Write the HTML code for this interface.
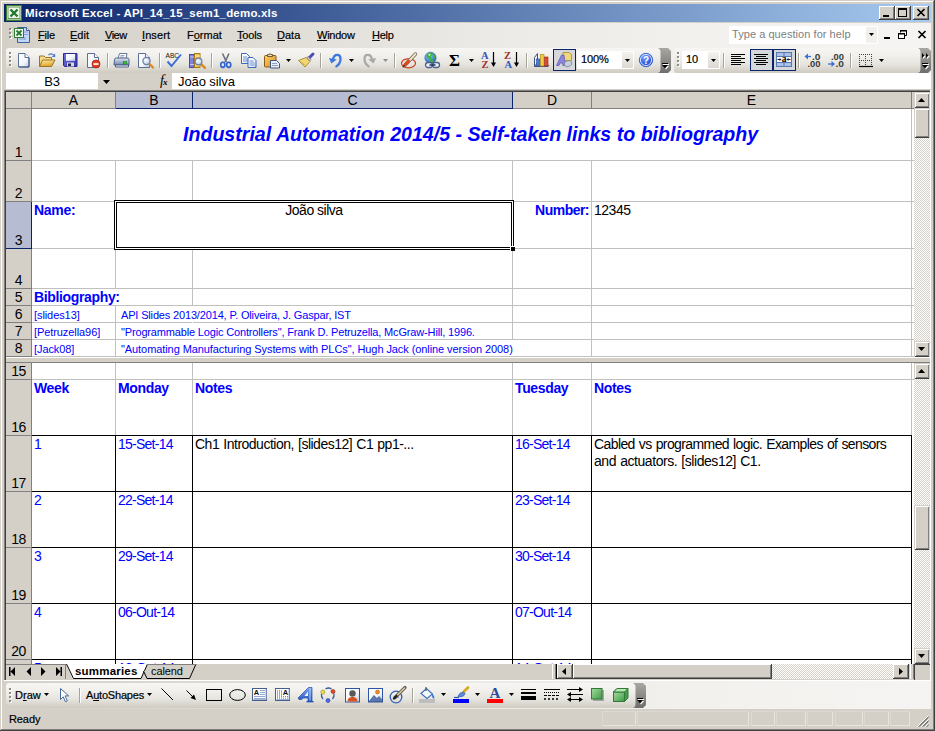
<!DOCTYPE html>
<html lang="en"><head><meta charset="utf-8"><title>Microsoft Excel - API_14_15_sem1_demo.xls</title>
<style>
*{box-sizing:border-box;margin:0;padding:0}
html,body{width:935px;height:731px;overflow:hidden;background:#d4d0c8}
body{position:relative;font-family:"Liberation Sans",sans-serif;font-size:11px;color:#000}
.a{position:absolute}
.t{position:absolute;white-space:nowrap;line-height:1}
.ui{font-size:11px;letter-spacing:0;-webkit-text-stroke:0.2px #000}
u{text-decoration:underline;text-underline-offset:1px}
.cell{position:absolute;white-space:nowrap;line-height:16px;font-size:14px;letter-spacing:-0.49px}
.b{color:#0000ff}
.bold{font-weight:bold;letter-spacing:-0.35px}
.gl{position:absolute;background:#c0c0c0}
.bl{position:absolute;background:#000}
.rh{position:absolute;left:6px;width:26px;background:#d4d0c8;border-right:1px solid #808080;border-bottom:1px solid #808080;text-align:center}
.rh span{position:absolute;left:0;right:0;bottom:0;line-height:16px;font-size:14px;letter-spacing:-0.5px}
.ch{position:absolute;top:92px;height:17px;background:#d4d0c8;border-right:1px solid #808080;border-bottom:1px solid #808080;font-size:14px;text-align:center;line-height:16px}
.sel{background:#b6bdd2;border-color:#0a246a}
.btn{position:absolute;background:#d4d0c8;box-shadow:inset -1px -1px 0 #404040,inset 1px 1px 0 #fff,inset -2px -2px 0 #808080}
.sb{position:absolute;background:#d4d0c8;box-shadow:inset 1px 1px 0 #d4d0c8,inset -1px 0 0 #d4d0c8,inset 0 -1px 0 #404040,inset 2px 2px 0 #fff,inset -2px -2px 0 #808080}
.track{position:absolute;background-color:#e9e7e3;background-image:conic-gradient(#fff 25%,#d4d0c8 0 50%,#fff 0 75%,#d4d0c8 0);background-size:2px 2px}
.sep{position:absolute;width:1px;background:#a6a398;box-shadow:1px 0 0 #fff}
.dot{position:absolute;width:2px;height:2px;background:#8d8a82;box-shadow:1px 1px 0 #fff}
svg{position:absolute;overflow:visible}
</style></head>
<body>
<div class="a" style="left:0;top:0;width:935px;height:731px;box-shadow:inset -1px -1px 0 #404040,inset 1px 1px 0 #d4d0c8,inset -2px -2px 0 #808080,inset 2px 2px 0 #fff"></div>
<div class="a" style="left:4px;top:4px;width:927px;height:18px;background:linear-gradient(90deg,#0a246a,#a6caf0)"></div>
<svg style="left:6px;top:5px" width="16" height="16" viewBox="0 0 16 16"><rect x="0.5" y="0.5" width="15" height="15" fill="#5e9552" stroke="#3d7a36"/><rect x="1.5" y="1.5" width="13" height="13" fill="none" stroke="#a9c9a0"/><rect x="2.500" y="2.500" width="11" height="10.500" fill="#f1f6ee"/><path d="M4.500 4.500l7 7M11.500 4.500l-7 7" stroke="#1f7a2c" stroke-width="2.400"/></svg>
<div class="t" style="left:25px;top:8px;color:#fff;font-size:11.5px;font-weight:bold;letter-spacing:0.2px">Microsoft Excel - API_14_15_sem1_demo.xls</div>
<div class="btn" style="left:879px;top:6px;width:16px;height:14px"></div><div class="a" style="left:883px;top:15px;width:6px;height:2px;background:#000"></div>
<div class="btn" style="left:895px;top:6px;width:16px;height:14px"></div><div class="a" style="left:898px;top:8px;width:9px;height:9px;border:1px solid #000;border-top-width:2px"></div>
<div class="btn" style="left:913px;top:6px;width:16px;height:14px"></div><svg style="left:917px;top:9px" width="8" height="7" viewBox="0 0 8 7"><path d="M0.500 0l7 7M7.500 0l-7 7" stroke="#000" stroke-width="1.700"/></svg>
<div class="a" style="left:4px;top:23px;width:927px;height:25px;background:linear-gradient(90deg,#d4d0c8 0%,#dedbd4 25%,#ebe9e5 50%,#f2f1ee 75%,#f5f4f2 100%)"></div>
<div class="dot" style="left:9px;top:28px"></div><div class="dot" style="left:9px;top:32px"></div><div class="dot" style="left:9px;top:36px"></div>
<svg style="left:14px;top:27px" width="17" height="17" viewBox="0 0 17 17"><path d="M3.500 0.500h9l3 3v12h-12z" fill="#c3d7f7" stroke="#3f5f9a"/><path d="M12.500 0.500v3h3" fill="#eef4ff" stroke="#3f5f9a"/><path d="M10 5h4M10 7.500h4M5 12h6M11 10v3" stroke="#7f9fd8"/><rect x="0.500" y="1.500" width="9" height="9" fill="#f1f6ee" stroke="#2f7d32"/><path d="M2.500 3.500l5 5M7.500 3.500l-5 5" stroke="#1e7a2a" stroke-width="1.800"/></svg>
<div class="t ui" style="left:38px;top:30px;letter-spacing:-0.2px"><u>F</u>ile</div><div class="t ui" style="left:70px;top:30px;letter-spacing:0px"><u>E</u>dit</div><div class="t ui" style="left:105px;top:30px;letter-spacing:-0.5px"><u>V</u>iew</div><div class="t ui" style="left:142px;top:30px;letter-spacing:0.1px"><u>I</u>nsert</div><div class="t ui" style="left:187px;top:30px;letter-spacing:0px">F<u>o</u>rmat</div><div class="t ui" style="left:237px;top:30px;letter-spacing:-0.2px"><u>T</u>ools</div><div class="t ui" style="left:277px;top:30px;letter-spacing:0px"><u>D</u>ata</div><div class="t ui" style="left:317px;top:30px;letter-spacing:-0.25px"><u>W</u>indow</div><div class="t ui" style="left:372px;top:30px;letter-spacing:-0.25px"><u>H</u>elp</div>
<div class="a" style="left:729px;top:26px;width:149px;height:18px;background:#fff"></div><div class="t ui" style="left:732px;top:29px;color:#808080;letter-spacing:0.05px;-webkit-text-stroke:0">Type a question for help</div><div class="a" style="left:866px;top:27px;width:11px;height:16px;background:#f1f0ed"></div><svg style="left:869px;top:33px" width="5" height="3" viewBox="0 0 7 4"><path d="M0 0h7l-3.500 4z" fill="#000"/></svg>
<div class="a" style="left:884px;top:37px;width:6px;height:2px;background:#000"></div><svg style="left:898px;top:30px" width="9" height="9" viewBox="0 0 9 9"><path d="M2.500 2.500v-2h6v5h-2" fill="none" stroke="#000"/><path d="M2 1h7" stroke="#000"/><rect x="0.500" y="3.500" width="6" height="5" fill="#fff" stroke="#000"/><path d="M0 4h7" stroke="#000"/></svg><svg style="left:918px;top:31px" width="8" height="7" viewBox="0 0 8 7"><path d="M0.500 0l7 7M7.500 0l-7 7" stroke="#000" stroke-width="1.700"/></svg>
<div class="a" style="left:4px;top:48px;width:927px;height:25px;background:linear-gradient(90deg,#d4d0c8 0%,#dedbd4 25%,#ebe9e5 50%,#f2f1ee 75%,#f5f4f2 100%)"></div>
<div class="a" style="left:6px;top:48px;width:665px;height:25px;border-radius:3px 6px 6px 3px;background:linear-gradient(180deg,#f7f6f4 0%,#f1f0ec 30%,#e6e4de 65%,#cfcbc2 100%)"></div>
<div class="a" style="left:674px;top:48px;width:257px;height:25px;border-radius:3px 6px 6px 3px;background:linear-gradient(180deg,#f7f6f4 0%,#f1f0ec 30%,#e6e4de 65%,#cfcbc2 100%)"></div>
<div class="dot" style="left:9px;top:52px"></div><div class="dot" style="left:9px;top:56px"></div><div class="dot" style="left:9px;top:60px"></div><div class="dot" style="left:9px;top:64px"></div>
<div class="dot" style="left:677px;top:52px"></div><div class="dot" style="left:677px;top:56px"></div><div class="dot" style="left:677px;top:60px"></div><div class="dot" style="left:677px;top:64px"></div>
<svg width="0" height="0" style="left:0;top:0"><defs>
<linearGradient id="gpage" x1="0" y1="0" x2="1" y2="1"><stop offset="0" stop-color="#ffffff"/><stop offset="0.6" stop-color="#f2f5fb"/><stop offset="1" stop-color="#b9c9e6"/></linearGradient>
<linearGradient id="gfold" x1="0" y1="0" x2="0.3" y2="1"><stop offset="0" stop-color="#fdf0b0"/><stop offset="1" stop-color="#e2a326"/></linearGradient>
<linearGradient id="gdisk" x1="0" y1="0" x2="1" y2="1"><stop offset="0" stop-color="#7373e0"/><stop offset="1" stop-color="#3636a8"/></linearGradient>
<linearGradient id="gblue" x1="0" y1="0" x2="0" y2="1"><stop offset="0" stop-color="#7aa6ee"/><stop offset="1" stop-color="#1f4fc0"/></linearGradient>
<linearGradient id="ggray" x1="0" y1="0" x2="0" y2="1"><stop offset="0" stop-color="#c8c8c8"/><stop offset="1" stop-color="#8e8e8e"/></linearGradient>
<radialGradient id="glens" cx="0.4" cy="0.4" r="0.7"><stop offset="0" stop-color="#ffffff"/><stop offset="1" stop-color="#a8c4e8"/></radialGradient>
<radialGradient id="ghelp" cx="0.4" cy="0.3" r="0.8"><stop offset="0" stop-color="#6ea0ff"/><stop offset="1" stop-color="#0b39c4"/></radialGradient>
<radialGradient id="gglobe" cx="0.35" cy="0.3" r="0.8"><stop offset="0" stop-color="#8fd0ff"/><stop offset="1" stop-color="#1c58b8"/></radialGradient>
<linearGradient id="ggreen" x1="0" y1="0" x2="1" y2="1"><stop offset="0" stop-color="#a6dba0"/><stop offset="1" stop-color="#3f9a45"/></linearGradient>
<linearGradient id="gclip" x1="0" y1="0" x2="1" y2="1"><stop offset="0" stop-color="#fbd46a"/><stop offset="1" stop-color="#d98a1c"/></linearGradient>
<linearGradient id="gprn" x1="0" y1="0" x2="0" y2="1"><stop offset="0" stop-color="#dfe6f2"/><stop offset="1" stop-color="#6f86ad"/></linearGradient>
<linearGradient id="gopt" x1="0" y1="0" x2="0" y2="1"><stop offset="0" stop-color="#a9a7a0"/><stop offset="1" stop-color="#6e6e6e"/></linearGradient>
</defs></svg>
<svg style="left:18px;top:53px" width="12" height="15" viewBox="0 0 12 15"><path d="M0.500 0.500h6.500l4 4v9.500h-10.500z" fill="url(#gpage)" stroke="#5d6f98"/><path d="M7 0.500v4h4" fill="#fff" stroke="#5d6f98"/><path d="M1 14h10M11 5v9" stroke="#3f5284" fill="none"/></svg>
<svg style="left:39px;top:52px" width="17" height="16" viewBox="0 0 17 16"><path d="M0.500 14.500v-10.500h4.500l1.500 1.500h6v2.500" fill="#f6dc8a" stroke="#9a7420"/><path d="M0.500 14.500l3-6.500h12.500l-3.500 6.500z" fill="url(#gfold)" stroke="#9a7420"/><path d="M9.500 3q3-2.500 5.500 0.500" fill="none" stroke="#4a78c8" stroke-width="1.100"/><path d="M16.200 1.500v3.500h-3.500z" fill="#4a78c8"/></svg>
<svg style="left:63px;top:53px" width="15" height="15" viewBox="0 0 15 15"><path d="M0.500 0.500h13.500v13h-12.500l-1-1z" fill="url(#gdisk)" stroke="#2b2b90"/><rect x="3" y="1" width="9" height="6.500" fill="#f4f6fb"/><rect x="3" y="1" width="9" height="6.500" fill="url(#gpage)"/><rect x="4" y="9.500" width="7" height="4" fill="#d8dae6"/><rect x="5" y="10.500" width="3" height="2.500" fill="#26264a"/></svg>
<svg style="left:87px;top:53px" width="16" height="16" viewBox="0 0 16 16"><path d="M0.500 0.500h7l4 4v10h-11z" fill="url(#gpage)" stroke="#5d6f98"/><path d="M7.500 0.500v4h4" fill="#fff" stroke="#5d6f98"/><circle cx="9" cy="11" r="4" fill="#e2401c" stroke="#a8200c" stroke-width="0.800"/><rect x="6.500" y="10.200" width="5" height="1.700" fill="#fff"/></svg>
<div class="sep" style="left:107px;top:53px;height:15px"></div>
<svg style="left:114px;top:53px" width="16" height="15" viewBox="0 0 16 15"><path d="M4 5.500l1.500-5h7.500l-1 5z" fill="#fff" stroke="#6a7a9a"/><path d="M6.500 2.500h4M6 4h4" stroke="#9aa8c4"/><path d="M0.500 6.500q0-1.500 2-1.500h10.500q2 0 2 1.500v5.500h-15z" fill="url(#gprn)" stroke="#4e6288"/><path d="M1.500 12h13v2h-13z" fill="#eef1f7" stroke="#4e6288"/><rect x="9.500" y="8.500" width="3" height="2.500" fill="#2fd22f" stroke="#1c7a1c" stroke-width="0.600"/></svg>
<svg style="left:138px;top:53px" width="17" height="16" viewBox="0 0 17 16"><path d="M0.500 0.500h7l4 4v10h-11z" fill="url(#gpage)" stroke="#5d6f98"/><path d="M7.500 0.500v4h4" fill="#fff" stroke="#5d6f98"/><path d="M11.02 10.52l4 4" stroke="#d9891e" stroke-width="2.400" stroke-linecap="round"/><circle cx="8.5" cy="8" r="3.6" fill="url(#glens)" stroke="#6f7f9f" stroke-width="1.200"/></svg>
<div class="sep" style="left:159px;top:53px;height:15px"></div>
<svg style="left:165px;top:51px" width="18" height="18" viewBox="0 0 18 18"><text x="0.500" y="6.500" font-family="Liberation Sans,sans-serif" font-size="7.500" fill="#111" textLength="13.500" lengthAdjust="spacingAndGlyphs">ABC</text><path d="M2.500 10.500l4 4.500 9.500-11.500" fill="none" stroke="#3b6fd8" stroke-width="1.900" stroke-linejoin="miter"/></svg>
<svg style="left:189px;top:53px" width="17" height="16" viewBox="0 0 17 16"><rect x="0.500" y="1.500" width="4.500" height="13" fill="#8080dc" stroke="#4a4aa8"/><path d="M1 4h4M1 11.500h4" stroke="#c8c8f4"/><rect x="5.500" y="0.500" width="5.500" height="14" fill="#f0c24a" stroke="#a87c18"/><path d="M6 3h5M6 12h5" stroke="#fff0b8"/><path d="M11.88 10.88l4 4" stroke="#d9891e" stroke-width="2.400" stroke-linecap="round"/><circle cx="9.5" cy="8.5" r="3.4" fill="url(#glens)" stroke="#6f7f9f" stroke-width="1.200"/></svg>
<div class="sep" style="left:211px;top:53px;height:15px"></div>
<svg style="left:220px;top:53px" width="12" height="15" viewBox="0 0 12 15"><path d="M2.500 0.500l4 8.500M9 0.500l-4 8.500" stroke="#6a6f80" stroke-width="1.600" fill="none"/><ellipse cx="2.800" cy="11.800" rx="2.100" ry="2.600" fill="none" stroke="#2f62d0" stroke-width="1.600"/><ellipse cx="8.700" cy="11.800" rx="2.100" ry="2.600" fill="none" stroke="#2f62d0" stroke-width="1.600"/></svg>
<svg style="left:241px;top:53px" width="16" height="15" viewBox="0 0 16 15"><path d="M0.500 0.500h5l3 3v7h-8z" fill="url(#gpage)" stroke="#3f66b8"/><path d="M2 4h4M2 6h5M2 8h5" stroke="#6a90d8"/><g transform="translate(6.500,4)"><path d="M0.500 0.500h5l3 3v7h-8z" fill="url(#gpage)" stroke="#3f66b8"/><path d="M2 4h4M2 6h5M2 8h5" stroke="#6a90d8"/></g></svg>
<svg style="left:264px;top:53px" width="17" height="16" viewBox="0 0 17 16"><rect x="0.500" y="2.500" width="11.500" height="11.500" rx="1" fill="url(#gclip)" stroke="#8a5a14"/><path d="M3.500 3.500v-2h1.500q1-1.800 2 0h1.500v2z" fill="#e9dcb0" stroke="#6a5a3a"/><path d="M6.500 7.500h6l3 3v4.500h-9z" fill="#e8eef8" stroke="#44557a"/><path d="M8 10.500h5M8 12.500h6" stroke="#8aa0c8"/></svg>
<svg style="left:286px;top:59px" width="5" height="3" viewBox="0 0 5 3"><path d="M0 0h5l-2.500 3z" fill="#000"/></svg>
<svg style="left:298px;top:52px" width="17" height="16" viewBox="0 0 17 16"><path d="M10.500 6.500l4.500-4.500" stroke="#4a4ab8" stroke-width="3" stroke-linecap="round"/><path d="M10 4.500l3 3-1.500 1.500-3-3z" fill="#c8c8d8" stroke="#70708a" stroke-width="0.700"/><path d="M8 5.500l4 4-5 5.500-6.500-6.500z" fill="#f0d878" stroke="#a88a28" stroke-width="0.900"/><path d="M3 9.500l4 4" stroke="#c8a838"/></svg>
<div class="sep" style="left:320px;top:53px;height:15px"></div>
<svg style="left:329px;top:52px" width="14" height="16" viewBox="0 0 14 16"><g transform="translate(0,1) scale(0.92)"><path d="M4.500 7q0.500-5 4.500-5 3.500 0 3.500 4.500 0 5-4.500 8" fill="none" stroke="#3b78e0" stroke-width="2.500" stroke-linecap="round"/><path d="M0 5.500l8.500 1.500-6 4.500z" fill="#3b78e0"/></g></svg>
<svg style="left:349px;top:59px" width="5" height="3" viewBox="0 0 5 3"><path d="M0 0h5l-2.500 3z" fill="#000"/></svg>
<svg style="left:362px;top:52px" width="14" height="16" viewBox="0 0 14 16"><g transform="translate(14,1) scale(-0.92,0.92)"><path d="M4.500 7q0.500-5 4.500-5 3.500 0 3.500 4.500 0 5-4.500 8" fill="none" stroke="#a9a9a9" stroke-width="2.500" stroke-linecap="round"/><path d="M0 5.500l8.500 1.500-6 4.500z" fill="#a9a9a9"/></g></svg>
<svg style="left:383px;top:59px" width="5" height="3" viewBox="0 0 5 3"><path d="M0 0h5l-2.500 3z" fill="#8e8e8e"/></svg>
<div class="sep" style="left:394px;top:53px;height:15px"></div>
<svg style="left:401px;top:52px" width="18" height="17" viewBox="0 0 18 17"><ellipse cx="7.500" cy="11.300" rx="7" ry="4.500" fill="none" stroke="#cc3a18" stroke-width="1.200"/><path d="M4.500 12.500l10-10.500" stroke="#6f6450" stroke-width="3.400" stroke-linecap="round"/><path d="M5.500 11.500l9-9.500" stroke="#efe6cc" stroke-width="1.900" stroke-linecap="round"/><path d="M3.500 13.500l4-4.300" stroke="#e04a20" stroke-width="3.200" stroke-linecap="round"/><path d="M2.200 14.800l1-1" stroke="#333" stroke-width="1.400" stroke-linecap="round"/></svg>
<svg style="left:424px;top:52px" width="17" height="17" viewBox="0 0 17 17"><circle cx="6.500" cy="5.800" r="5.600" fill="url(#gglobe)" stroke="#3a62a8" stroke-width="0.700"/><path d="M2.500 3q2.500-3 6.500-2l-0.500 2-2 1.500 1 2 2 2.500-1 2-2.500-1.500-1-3-2-0.500z" fill="#3fb33f"/><path d="M10 2.500l1.500 1.500-0.500 3-1.500-1.500z" fill="#3fb33f"/><circle cx="5.500" cy="2.800" r="1" fill="#d8f4d0"/><rect x="1.500" y="10.500" width="7" height="5" rx="2.500" fill="#eef2fa" stroke="#4a5f8c" stroke-width="1.300"/><rect x="8.500" y="10.500" width="7" height="5" rx="2.500" fill="#eef2fa" stroke="#4a5f8c" stroke-width="1.300"/><path d="M5.500 13h6" stroke="#1c2c58" stroke-width="1.500"/></svg>
<svg style="left:449px;top:52px" width="12" height="16" viewBox="0 0 12 16"><text x="0" y="13.500" font-family="Liberation Serif,serif" font-size="17" font-weight="bold" fill="#000" textLength="11" lengthAdjust="spacingAndGlyphs">Σ</text></svg>
<svg style="left:469px;top:59px" width="5" height="3" viewBox="0 0 5 3"><path d="M0 0h5l-2.500 3z" fill="#000"/></svg>
<svg style="left:481px;top:51px" width="17" height="18" viewBox="0 0 17 18"><text x="0" y="8" font-family="Liberation Serif,serif" font-size="10.500" font-weight="bold" fill="#3355b8">A</text><text x="0.500" y="16.500" font-family="Liberation Serif,serif" font-size="10.500" font-weight="bold" fill="#a03030">Z</text><path d="M12.500 1v13" stroke="#000" stroke-width="1.200"/><path d="M10 11.500h5l-2.500 4.500z" fill="#000"/></svg>
<svg style="left:504px;top:51px" width="17" height="18" viewBox="0 0 17 18"><text x="0" y="8" font-family="Liberation Serif,serif" font-size="10.500" font-weight="bold" fill="#a03030">Z</text><text x="0.500" y="16.500" font-family="Liberation Serif,serif" font-size="10.500" font-weight="bold" fill="#3355b8">A</text><path d="M12.500 1v13" stroke="#000" stroke-width="1.200"/><path d="M10 11.500h5l-2.500 4.500z" fill="#000"/></svg>
<div class="sep" style="left:526px;top:53px;height:15px"></div>
<svg style="left:533px;top:52px" width="17" height="16" viewBox="0 0 17 16"><path d="M1.500 14.500v-9l3-4v9z" fill="#eef2fa" stroke="#44557a"/><path d="M1.500 14.500h13.500l1-1.500" fill="none" stroke="#44557a"/><rect x="3.500" y="7" width="3.500" height="7" fill="#4a7ae0" stroke="#2a4a9a" stroke-width="0.600"/><rect x="7.500" y="2.500" width="3.500" height="11.500" fill="#f2cf3a" stroke="#a8861a" stroke-width="0.600"/><rect x="11.500" y="5" width="3.500" height="9" fill="#e0482a" stroke="#9a2a16" stroke-width="0.600"/></svg>
<div class="a" style="left:553px;top:49px;width:23px;height:22px;background:#d6d7da;border:1px solid #0a246a"></div>
<svg style="left:556px;top:52px" width="17" height="17" viewBox="0 0 17 17"><path d="M7 0.500h6l2.500 2v6h-6l-2.500-2z" fill="#f0d878" stroke="#a88a28" stroke-width="0.800"/><path d="M0.500 13.500l5-10.500h2.500l1.500 10.500h-2.600l-0.300-2.500h-2.600l-1 2.500z" fill="#8a86dc" stroke="#5a56b0" stroke-width="0.700"/><rect x="8.500" y="9" width="7.500" height="5.500" rx="2.700" transform="rotate(-25 12 12)" fill="#c8d0dc" stroke="#7a8498" stroke-width="0.800"/></svg>
<div class="a" style="left:577px;top:51px;width:57px;height:18px;background:#fff"></div><div class="a" style="left:622px;top:52px;width:11px;height:16px;background:linear-gradient(180deg,#f3f2ee,#dcd9d2)"></div><div class="t ui" style="left:581px;top:54px;font-size:11px;letter-spacing:-0.1px">100%</div><svg style="left:625px;top:59px" width="5" height="3" viewBox="0 0 5 3"><path d="M0 0h5l-2.500 3z" fill="#000"/></svg>
<svg style="left:638px;top:52px" width="16" height="16" viewBox="0 0 16 16"><circle cx="8" cy="8" r="6.700" fill="url(#ghelp)" stroke="#2a58c8" stroke-width="0.800"/><circle cx="8" cy="8" r="5.600" fill="none" stroke="#e8f0ff" stroke-width="0.900"/><text x="8" y="11.500" text-anchor="middle" font-family="Liberation Sans,sans-serif" font-size="10" font-weight="bold" fill="#fff">?</text></svg>
<div class="a" style="left:682px;top:51px;width:38px;height:18px;background:#fff"></div><div class="a" style="left:708px;top:52px;width:11px;height:16px;background:linear-gradient(180deg,#f3f2ee,#dcd9d2)"></div><div class="t ui" style="left:686px;top:54px;font-size:11px;letter-spacing:-0.1px">10</div><svg style="left:711px;top:59px" width="5" height="3" viewBox="0 0 5 3"><path d="M0 0h5l-2.500 3z" fill="#000"/></svg>
<div class="sep" style="left:723px;top:53px;height:15px"></div>
<svg style="left:731px;top:54px" width="14" height="11" viewBox="0 0 14 11"><rect x="0" y="0" width="14" height="1" fill="#000"/><rect x="0" y="2" width="10" height="1" fill="#000"/><rect x="0" y="4" width="14" height="1" fill="#000"/><rect x="0" y="6" width="10" height="1" fill="#000"/><rect x="0" y="8" width="14" height="1" fill="#000"/><rect x="0" y="10" width="10" height="1" fill="#000"/></svg>
<div class="a" style="left:750px;top:49px;width:23px;height:22px;background:#d6d7da;border:1px solid #0a246a"></div>
<svg style="left:754px;top:54px" width="14" height="11" viewBox="0 0 14 11"><rect x="0" y="0" width="14" height="1" fill="#000"/><rect x="2" y="2" width="10" height="1" fill="#000"/><rect x="0" y="4" width="14" height="1" fill="#000"/><rect x="2" y="6" width="10" height="1" fill="#000"/><rect x="0" y="8" width="14" height="1" fill="#000"/><rect x="2" y="10" width="10" height="1" fill="#000"/></svg>
<div class="a" style="left:773px;top:49px;width:23px;height:22px;background:#d6d7da;border:1px solid #0a246a"></div>
<svg style="left:776px;top:52px" width="16" height="15" viewBox="0 0 16 15"><rect x="0.500" y="0.500" width="15" height="14" fill="#fdfdff" stroke="#5a78b0"/><rect x="1" y="1" width="14" height="3" fill="#a9c0e8"/><rect x="1" y="11" width="14" height="3" fill="#a9c0e8"/><path d="M8 1v3M8 11v3" stroke="#5a78b0"/><path d="M1 4.500h14M1 10.500h14" stroke="#5a78b0"/><text x="8" y="10" text-anchor="middle" font-family="Liberation Serif,serif" font-size="9.500" font-weight="bold" fill="#000">a</text><path d="M1.500 7.500h3.500M11 7.500h3.500" stroke="#222" stroke-width="1"/><path d="M3.500 6l2 1.500-2 1.500zM12.500 6l-2 1.500 2 1.500z" fill="#222"/></svg>
<div class="sep" style="left:798px;top:53px;height:15px"></div>
<svg style="left:804px;top:51px" width="18" height="18" viewBox="0 0 18 18"><path d="M2 5.500h5" stroke="#3b6fd8" stroke-width="1.300"/><path d="M0.500 5.500l3.500-3v6z" fill="#3b6fd8"/><text x="8" y="8.500" font-family="Liberation Sans,sans-serif" font-size="8.500" font-weight="bold" fill="#3a3a3a" textLength="8.500" lengthAdjust="spacingAndGlyphs">.0</text><text x="3.500" y="16" font-family="Liberation Sans,sans-serif" font-size="8.500" font-weight="bold" fill="#3a3a3a" textLength="13" lengthAdjust="spacingAndGlyphs">.00</text></svg>
<svg style="left:828px;top:51px" width="18" height="18" viewBox="0 0 18 18"><text x="3" y="8.500" font-family="Liberation Sans,sans-serif" font-size="8.500" font-weight="bold" fill="#3a3a3a" textLength="13" lengthAdjust="spacingAndGlyphs">.00</text><path d="M0 13h5" stroke="#3b6fd8" stroke-width="1.300"/><path d="M7 13l-3.500-3v6z" fill="#3b6fd8"/><text x="7.500" y="16" font-family="Liberation Sans,sans-serif" font-size="8.500" font-weight="bold" fill="#3a3a3a" textLength="8.500" lengthAdjust="spacingAndGlyphs">.0</text></svg>
<div class="sep" style="left:850px;top:53px;height:15px"></div>
<svg style="left:859px;top:54px" width="14" height="14" viewBox="0 0 14 14"><path d="M0 0.500h14M0 6.500h14M0.500 0v12M6.500 0v12M12.500 0v12" fill="none" stroke="#444" stroke-width="1" stroke-dasharray="1 1"/><path d="M0 12.500h14" stroke="#000" stroke-width="1.200"/></svg>
<svg style="left:879px;top:59px" width="5" height="3" viewBox="0 0 5 3"><path d="M0 0h5l-2.500 3z" fill="#000"/></svg>
<svg style="left:658px;top:48px" width="13" height="25" viewBox="0 0 13 25"><path d="M0 0h10l3 3v19l-3 3h-10q2.500-1 2.500-3.500v-18q0-2.500-2.500-3.500z" fill="url(#gopt)"/></svg><svg style="left:918px;top:48px" width="13" height="25" viewBox="0 0 13 25"><path d="M0 0h10l3 3v19l-3 3h-10q2.500-1 2.500-3.500v-18q0-2.500-2.500-3.500z" fill="url(#gopt)"/></svg><svg style="left:662px;top:63px" width="7" height="7" viewBox="0 0 7 7"><path d="M1 1.500h6" stroke="#fff"/><path d="M1 3h6l-3 3.500z" fill="#fff"/><path d="M0 0.500h6" stroke="#000"/><path d="M0 2h6l-3 3.500z" fill="#000"/></svg><svg style="left:922px;top:63px" width="7" height="7" viewBox="0 0 7 7"><path d="M1 1.500h6" stroke="#fff"/><path d="M1 3h6l-3 3.500z" fill="#fff"/><path d="M0 0.500h6" stroke="#000"/><path d="M0 2h6l-3 3.500z" fill="#000"/></svg><svg style="left:922px;top:53px" width="7" height="6" viewBox="0 0 7 6"><path d="M1 1l2.500 2.500-2.500 2.500zM5 1l2.500 2.500-2.500 2.500z" fill="#fff"/><path d="M0 0l2.500 2.500-2.500 2.500zM4 0l2.500 2.500-2.500 2.500z" fill="#000"/></svg>

<div class="a" style="left:4px;top:73px;width:927px;height:17px;background:#d4d0c8"></div><div class="a" style="left:6px;top:73px;width:92px;height:16px;background:#fff"></div><div class="t" style="left:6px;top:75px;width:92px;text-align:center;font-size:13px;letter-spacing:-0.1px">B3</div><svg style="left:103px;top:80px" width="7" height="4" viewBox="0 0 7 4"><path d="M0 0h7l-3.500 4z" fill="#000"/></svg><div class="t" style="left:160px;top:74px;font-family:'Liberation Serif',serif;font-style:italic;font-size:14px">f<span style="font-size:9px;font-weight:bold;position:relative;top:0;left:-1px">x</span></div><div class="a" style="left:172px;top:73px;width:759px;height:16px;background:#fff"></div><div class="t" style="left:178px;top:75px;font-size:13px;letter-spacing:-0.1px">João silva</div>
<div class="a" style="left:4px;top:90px;width:927px;height:591px;background:#fff"></div>
<div class="a" style="left:4px;top:90px;width:927px;height:1px;background:#808080"></div><div class="a" style="left:5px;top:91px;width:925px;height:1px;background:#404040"></div><div class="a" style="left:4px;top:90px;width:1px;height:591px;background:#808080"></div><div class="a" style="left:5px;top:91px;width:1px;height:589px;background:#404040"></div><div class="a" style="left:930px;top:90px;width:1px;height:591px;background:#fff"></div><div class="a" style="left:4px;top:680px;width:927px;height:1px;background:#fff"></div>
<div class="ch" style="left:6px;width:26px"></div><div class="ch" style="left:32px;width:84px">A</div><div class="ch sel" style="left:116px;width:77px">B</div><div class="ch sel" style="left:193px;width:320px">C</div><div class="ch" style="left:513px;width:79px">D</div><div class="ch" style="left:592px;width:320px">E</div><div class="a" style="left:912px;top:92px;width:2px;height:17px;background:#d4d0c8;border-bottom:1px solid #808080"></div>
<div class="rh" style="top:109px;height:52px"><span>1</span></div><div class="rh" style="top:161px;height:41px"><span>2</span></div><div class="rh sel" style="top:202px;height:47px"><span>3</span></div><div class="rh" style="top:249px;height:40px"><span>4</span></div><div class="rh" style="top:289px;height:17px"><span>5</span></div><div class="rh" style="top:306px;height:17px"><span>6</span></div><div class="rh" style="top:323px;height:17px"><span>7</span></div><div class="rh" style="top:340px;height:17px"><span>8</span></div>
<div class="gl" style="left:32px;top:160px;width:882px;height:1px"></div><div class="gl" style="left:32px;top:201px;width:882px;height:1px"></div><div class="gl" style="left:32px;top:248px;width:882px;height:1px"></div><div class="gl" style="left:32px;top:288px;width:882px;height:1px"></div><div class="gl" style="left:32px;top:305px;width:882px;height:1px"></div><div class="gl" style="left:32px;top:322px;width:882px;height:1px"></div><div class="gl" style="left:32px;top:339px;width:882px;height:1px"></div><div class="gl" style="left:32px;top:356px;width:882px;height:1px"></div><div class="gl" style="left:115px;top:161px;width:1px;height:195px"></div><div class="gl" style="left:192px;top:161px;width:1px;height:195px"></div><div class="gl" style="left:512px;top:161px;width:1px;height:195px"></div><div class="gl" style="left:591px;top:161px;width:1px;height:195px"></div><div class="gl" style="left:911px;top:161px;width:1px;height:195px"></div><div class="gl" style="left:911px;top:109px;width:1px;height:52px"></div>
<div class="a" style="left:115px;top:289px;width:1px;height:16px;background:#fff"></div><div class="a" style="left:192px;top:306px;width:1px;height:50px;background:#fff"></div><div class="a" style="left:512px;top:340px;width:1px;height:16px;background:#fff"></div>
<div class="t b" style="left:183px;top:125px;font-size:19.6px;font-weight:bold;letter-spacing:0;font-style:italic">Industrial Automation 2014/5 - Self-taken links to bibliography</div>
<div class="cell b bold" style="left:34px;top:202px;letter-spacing:-0.3px">Name:</div><div class="a" style="left:114px;top:200px;width:400px;height:50px;border:1px solid #000;box-shadow:inset 0 0 0 1px #fff,inset 0 0 0 2px #000;background:#fff"></div><div class="a" style="left:510px;top:246px;width:5px;height:5px;background:#000;border-top:1px solid #fff;border-left:1px solid #fff"></div><div class="cell" style="left:116px;top:202px;width:396px;text-align:center">João silva</div><div class="cell b bold" style="left:513px;top:202px;width:76px;text-align:right;letter-spacing:-0.52px">Number:</div><div class="cell" style="left:594px;top:202px">12345</div>
<div class="cell b bold" style="left:34px;top:289px">Bibliography:</div><div class="cell b" style="left:34px;top:308px;font-size:11px;letter-spacing:-0.08px;line-height:15px">[slides13]</div><div class="cell b" style="left:121px;top:308px;font-size:11px;letter-spacing:-0.16px;line-height:15px">API Slides 2013/2014, P. Oliveira, J. Gaspar, IST</div><div class="cell b" style="left:34px;top:325px;font-size:11px;letter-spacing:-0.08px;line-height:15px">[Petruzella96]</div><div class="cell b" style="left:121px;top:325px;font-size:11px;letter-spacing:-0.16px;line-height:15px">"Programmable Logic Controllers", Frank D. Petruzella, McGraw-Hill, 1996.</div><div class="cell b" style="left:34px;top:342px;font-size:11px;letter-spacing:-0.08px;line-height:15px">[Jack08]</div><div class="cell b" style="left:121px;top:342px;font-size:11px;letter-spacing:-0.08px;line-height:15px">"Automating Manufacturing Systems with PLCs", Hugh Jack (online version 2008)</div>
<div class="a" style="left:6px;top:357px;width:924px;height:6px;background:#d4d0c8;border-top:1px solid #fff;border-bottom:1px solid #808080"></div>
<div class="rh" style="top:363px;height:17px"><span>15</span></div><div class="rh" style="top:380px;height:56px"><span>16</span></div><div class="rh" style="top:436px;height:56px"><span>17</span></div><div class="rh" style="top:492px;height:56px"><span>18</span></div><div class="rh" style="top:548px;height:56px"><span>19</span></div><div class="rh" style="top:604px;height:56px"><span>20</span></div><div class="rh" style="top:660px;height:4px;border-bottom:0"></div>
<div class="gl" style="left:32px;top:379px;width:882px;height:1px"></div><div class="gl" style="left:115px;top:363px;width:1px;height:72px"></div><div class="gl" style="left:192px;top:363px;width:1px;height:72px"></div><div class="gl" style="left:512px;top:363px;width:1px;height:72px"></div><div class="gl" style="left:591px;top:363px;width:1px;height:72px"></div><div class="gl" style="left:911px;top:363px;width:1px;height:72px"></div><div class="bl" style="left:32px;top:435px;width:880px;height:1px"></div><div class="bl" style="left:32px;top:491px;width:880px;height:1px"></div><div class="bl" style="left:32px;top:547px;width:880px;height:1px"></div><div class="bl" style="left:32px;top:603px;width:880px;height:1px"></div><div class="bl" style="left:32px;top:659px;width:880px;height:1px"></div><div class="bl" style="left:115px;top:435px;width:1px;height:229px"></div><div class="bl" style="left:192px;top:435px;width:1px;height:229px"></div><div class="bl" style="left:512px;top:435px;width:1px;height:229px"></div><div class="bl" style="left:591px;top:435px;width:1px;height:229px"></div><div class="bl" style="left:911px;top:435px;width:1px;height:229px"></div>
<div class="cell b bold" style="left:34px;top:380px">Week</div><div class="cell b bold" style="left:118px;top:380px">Monday</div><div class="cell b bold" style="left:195px;top:380px">Notes</div><div class="cell b bold" style="left:515px;top:380px">Tuesday</div><div class="cell b bold" style="left:594px;top:380px">Notes</div><div class="cell b" style="left:34px;top:436px">1</div><div class="cell b" style="left:118px;top:436px;letter-spacing:-0.75px">15-Set-14</div><div class="cell b" style="left:515px;top:436px;letter-spacing:-0.75px">16-Set-14</div><div class="cell b" style="left:34px;top:492px">2</div><div class="cell b" style="left:118px;top:492px;letter-spacing:-0.75px">22-Set-14</div><div class="cell b" style="left:515px;top:492px;letter-spacing:-0.75px">23-Set-14</div><div class="cell b" style="left:34px;top:548px">3</div><div class="cell b" style="left:118px;top:548px;letter-spacing:-0.75px">29-Set-14</div><div class="cell b" style="left:515px;top:548px;letter-spacing:-0.75px">30-Set-14</div><div class="cell b" style="left:34px;top:604px">4</div><div class="cell b" style="left:118px;top:604px;letter-spacing:-0.75px">06-Out-14</div><div class="cell b" style="left:515px;top:604px;letter-spacing:-0.75px">07-Out-14</div><div class="cell" style="left:195px;top:436px;letter-spacing:-0.5px;word-spacing:0.75px">Ch1 Introduction, [slides12] C1 pp1-...</div><div class="cell" style="left:594px;top:436px;line-height:17px;letter-spacing:-0.6px;word-spacing:0.75px">Cabled vs programmed logic. Examples of sensors</div><div class="cell" style="left:594px;top:453px;line-height:17px;letter-spacing:-0.45px;word-spacing:0.75px">and actuators. [slides12] C1.</div>
<div class="a" style="left:32px;top:660px;width:879px;height:4px;overflow:hidden"><div class="cell b" style="left:2px;top:0">5</div><div class="cell b" style="left:86px;top:0;letter-spacing:-0.75px">13-Out-14</div><div class="cell b" style="left:483px;top:0;letter-spacing:-0.75px">14-Out-14</div></div>
<div class="track" style="left:914px;top:92px;width:16px;height:265px"></div><div class="sb" style="left:914px;top:92px;width:16px;height:16px"></div><svg style="left:918px;top:98px" width="7" height="4" viewBox="0 0 7 4"><path d="M0 4h7l-3.500-4z" fill="#000"/></svg><div class="sb" style="left:914px;top:108px;width:16px;height:30px"></div><div class="sb" style="left:914px;top:341px;width:16px;height:16px"></div><svg style="left:918px;top:347px" width="7" height="4" viewBox="0 0 7 4"><path d="M0 0h7l-3.500 4z" fill="#000"/></svg>
<div class="track" style="left:914px;top:363px;width:16px;height:301px"></div><div class="sb" style="left:914px;top:363px;width:16px;height:16px"></div><svg style="left:918px;top:369px" width="7" height="4" viewBox="0 0 7 4"><path d="M0 4h7l-3.500-4z" fill="#000"/></svg><div class="sb" style="left:914px;top:505px;width:16px;height:45px"></div><div class="sb" style="left:914px;top:648px;width:16px;height:16px"></div><svg style="left:918px;top:654px" width="7" height="4" viewBox="0 0 7 4"><path d="M0 0h7l-3.500 4z" fill="#000"/></svg>
<div class="a" style="left:6px;top:664px;width:924px;height:16px;background:#d4d0c8"></div><div class="a" style="left:6px;top:664px;width:60px;height:1px;background:#808080"></div><div class="a" style="left:65px;top:664px;width:1px;height:15px;background:#808080"></div><svg style="left:8px;top:667px" width="56" height="9" viewBox="0 0 56 9"><path d="M1 0h1.500v9h-1.500z M7 0v9l-4.500-4.500z M23 0v9l-4.500-4.500z M33 0v9l4.500-4.500z M48 0v9l4.500-4.500z M52.500 0h1.500v9h-1.500z" fill="#000"/></svg><svg style="left:66px;top:664px" width="135" height="16" viewBox="0 0 135 16"><path d="M0 0h81v1l-6 14h-68l-7-15z" fill="#fff"/><path d="M0.500 0l7 14.500h67.500l6.500-14.500" fill="none" stroke="#000"/><path d="M77.500 7l3.500 7.500h42.500l6.500-14.500" fill="#d4d0c8" stroke="#000"/><path d="M81 0.500h49" stroke="#808080"/></svg><div class="t" style="left:75px;top:666px;font-size:11.5px;font-weight:bold;letter-spacing:0.2px">summaries</div><div class="t" style="left:151px;top:666px;font-size:11px;letter-spacing:-0.1px">calend</div>
<div class="a" style="left:552px;top:664px;width:5px;height:15px;background:#d4d0c8;box-shadow:inset 1px 0 0 #fff,inset -1px 0 0 #000,inset -2px 0 0 #808080"></div><div class="track" style="left:557px;top:664px;width:352px;height:15px"></div><div class="btn" style="left:557px;top:664px;width:16px;height:15px"></div><svg style="left:562px;top:668px" width="4" height="7" viewBox="0 0 4 7"><path d="M4 0v7l-4-3.500z" fill="#000"/></svg><div class="btn" style="left:573px;top:664px;width:199px;height:15px"></div><div class="btn" style="left:893px;top:664px;width:16px;height:15px"></div><svg style="left:899px;top:668px" width="4" height="7" viewBox="0 0 4 7"><path d="M0 0v7l4-3.500z" fill="#000"/></svg><div class="a" style="left:909px;top:664px;width:5px;height:15px;background:#d4d0c8;box-shadow:inset 1px 0 0 #d4d0c8,inset 2px 0 0 #fff,inset -1px 0 0 #808080"></div><div class="a" style="left:914px;top:664px;width:16px;height:16px;background:#d4d0c8;box-shadow:inset 1px 1px 0 #404040"></div>
<div class="a" style="left:4px;top:681px;width:927px;height:28px;background:linear-gradient(90deg,#d4d0c8 0%,#dedbd4 25%,#ebe9e5 50%,#f2f1ee 75%,#f5f4f2 100%)"></div><div class="a" style="left:6px;top:683px;width:640px;height:25px;border-radius:3px 6px 6px 3px;background:linear-gradient(180deg,#f7f6f4 0%,#f1f0ec 30%,#e6e4de 65%,#cfcbc2 100%)"></div><div class="dot" style="left:9px;top:688px"></div><div class="dot" style="left:9px;top:692px"></div><div class="dot" style="left:9px;top:696px"></div><div class="dot" style="left:9px;top:700px"></div>
<div class="t ui" style="left:15px;top:690px">D<u>r</u>aw</div><div class="t ui" style="left:86px;top:690px;letter-spacing:-0.2px">A<u>u</u>toShapes</div>
<svg style="left:44px;top:693px" width="5" height="3" viewBox="0 0 5 3"><path d="M0 0h5l-2.500 3z" fill="#000"/></svg>
<svg style="left:60px;top:688px" width="10" height="15" viewBox="0 0 10 15"><path d="M0.500 0.500v11l2.700-2.700 2.300 5 1.800-0.900-2.300-5h3.700z" fill="#fff" stroke="#4a6a9c" stroke-width="1" stroke-linejoin="round"/></svg>
<div class="sep" style="left:79px;top:688px;height:15px"></div>
<svg style="left:147px;top:693px" width="5" height="3" viewBox="0 0 5 3"><path d="M0 0h5l-2.500 3z" fill="#000"/></svg>
<svg style="left:161px;top:688px" width="13" height="13" viewBox="0 0 13 13"><path d="M0.500 0.500l11.500 11.500" stroke="#000" stroke-width="1"/></svg>
<svg style="left:186px;top:690px" width="11" height="11" viewBox="0 0 11 11"><path d="M0.500 0.500l7 7" stroke="#000" stroke-width="1"/><path d="M10 10l-5.500-2 3.500-3.500z" fill="#000"/></svg>
<svg style="left:206px;top:689px" width="16" height="12" viewBox="0 0 16 12"><rect x="0.500" y="0.500" width="15" height="11" fill="none" stroke="#000" stroke-width="1"/></svg>
<svg style="left:229px;top:689px" width="17" height="12" viewBox="0 0 17 12"><ellipse cx="8.500" cy="6" rx="7.800" ry="5.400" fill="none" stroke="#000" stroke-width="1"/></svg>
<svg style="left:252px;top:688px" width="15" height="13" viewBox="0 0 15 13"><rect x="0.500" y="0.500" width="14" height="12" fill="#fff" stroke="#4a5f88"/><path d="M1.500 11.500h12.500v-10.500" fill="none" stroke="#9fb4dc"/><text x="1.800" y="7.300" font-family="Liberation Sans,sans-serif" font-size="7.500" font-weight="bold" fill="#111">A</text><path d="M8 2.500h5M8 4.500h5M8 6.500h5M2 8.500h11M2 10.500h11" stroke="#8aa0cc" stroke-width="0.900"/></svg>
<svg style="left:275px;top:688px" width="15" height="13" viewBox="0 0 15 13"><rect x="0.500" y="0.500" width="14" height="12" fill="#fff" stroke="#4a5f88"/><path d="M1.500 11.500h12.500v-10.500" fill="none" stroke="#9fb4dc"/><text x="7.800" y="7.300" font-family="Liberation Sans,sans-serif" font-size="7.500" font-weight="bold" fill="#111">A</text><path d="M2.500 2v9M4.500 2v9M6.500 2v9" stroke="#8aa0cc" stroke-width="0.900"/><path d="M8.500 8v3.500M10.500 8v3.500M12.500 8v3.500" stroke="#5a74a8" stroke-width="0.900" stroke-dasharray="1 0.700"/></svg>
<svg style="left:297px;top:686px" width="17" height="17" viewBox="0 0 17 17"><path d="M1 12l10.500-10.500h3.500v13l1.500 1.500h-7l1.500-1.500v-2.500h-4.500l-2 1.500h-2.500z" fill="url(#gblue)" stroke="#2450b0" stroke-width="0.700" stroke-linejoin="round"/><path d="M7.500 10h3.500v-4.500z" fill="#f4f6fb"/><path d="M13 2v12.500" stroke="#bcd2f8" stroke-width="1"/></svg>
<svg style="left:320px;top:687px" width="16" height="16" viewBox="0 0 16 16"><path d="M5.500 2q3-2 6 0M14 6.500q0.500 3-1.500 5.500M3 12q-2-2-1.500-5" fill="none" stroke="#3b5f9c" stroke-width="1.300"/><circle cx="2.800" cy="5" r="2" fill="#f0e040" stroke="#8a8420" stroke-width="0.600"/><circle cx="13" cy="4.500" r="2" fill="#e0482a" stroke="#8a2a16" stroke-width="0.600"/><circle cx="8" cy="13.500" r="2" fill="#4a6af0" stroke="#26379a" stroke-width="0.600"/></svg>
<svg style="left:345px;top:688px" width="15" height="15" viewBox="0 0 15 15"><rect x="0.500" y="0.500" width="14" height="13.500" fill="url(#gpage)" stroke="#2f55a8"/><circle cx="7.500" cy="5.500" r="3.200" fill="#5a5a5a"/><path d="M2.500 13.500q0-4.500 5-4.500t5 4.500z" fill="#d8541c"/></svg>
<svg style="left:368px;top:688px" width="15" height="15" viewBox="0 0 15 15"><rect x="0.500" y="0.500" width="14" height="13.500" fill="url(#gpage)" stroke="#2f55a8"/><path d="M1 13.500l5-6 3 3 2-2 3.500 4v1z" fill="#5a78b8" stroke="#34456a" stroke-width="0.600"/><circle cx="9.500" cy="4" r="2" fill="#f08a1c" stroke="#a85a12" stroke-width="0.500"/></svg>
<svg style="left:389px;top:686px" width="18" height="18" viewBox="0 0 18 18"><circle cx="7" cy="11" r="5.800" fill="none" stroke="#2f62b8" stroke-width="1.300"/><path d="M4.500 12.500q2.500-3.500 5-1" fill="none" stroke="#2f62b8" stroke-width="1.200"/><path d="M6 11.500l10-10" stroke="#6a5e4a" stroke-width="3.200" stroke-linecap="round"/><path d="M7.500 10l8-8" stroke="#d8ccb0" stroke-width="1.400" stroke-linecap="round"/><path d="M5 12.500l2.500-2.500" stroke="#222" stroke-width="2.400" stroke-linecap="round"/></svg>
<div class="sep" style="left:412px;top:688px;height:15px"></div>
<svg style="left:419px;top:686px" width="17" height="17" viewBox="0 0 17 17"><path d="M2 7.500l5.500-5 6 5.500-5.500 4.500z" fill="#f4f8ff" stroke="#3b6fb8" stroke-width="1.100"/><path d="M13 8q3 1.500 2 5-2.500-1.500-2-5z" fill="#3b78d8"/><path d="M7 1v4" stroke="#555" stroke-width="1.200"/><rect x="0" y="13" width="16" height="4" fill="#bdbdbd"/></svg>
<svg style="left:441px;top:693px" width="5" height="3" viewBox="0 0 5 3"><path d="M0 0h5l-2.500 3z" fill="#000"/></svg>
<svg style="left:453px;top:686px" width="17" height="17" viewBox="0 0 17 17"><path d="M10.500 6l4.500-4.500" stroke="#d8a820" stroke-width="2.600" stroke-linecap="round"/><path d="M5 10.500q1-4 5.500-4.500l1.500 1.500q-1 4-7 3z" fill="#5a8ae0" stroke="#2f55a8" stroke-width="0.700"/><path d="M1 11.500h5" stroke="#2f55a8" stroke-width="1.200"/><rect x="0" y="13" width="16" height="4" fill="#0000ff"/></svg>
<svg style="left:475px;top:693px" width="5" height="3" viewBox="0 0 5 3"><path d="M0 0h5l-2.500 3z" fill="#000"/></svg>
<svg style="left:487px;top:686px" width="17" height="17" viewBox="0 0 17 17"><text x="8" y="11.500" text-anchor="middle" font-family="Liberation Serif,serif" font-size="15" font-weight="bold" fill="#2b4a9c">A</text><rect x="0" y="13" width="16" height="4" fill="#ff0000"/></svg>
<svg style="left:509px;top:693px" width="5" height="3" viewBox="0 0 5 3"><path d="M0 0h5l-2.500 3z" fill="#000"/></svg>
<svg style="left:521px;top:689px" width="15" height="12" viewBox="0 0 15 12"><rect x="0" y="0" width="15" height="1" fill="#000"/><rect x="0" y="3" width="15" height="2" fill="#000"/><rect x="0" y="7" width="15" height="4" fill="#000"/></svg>
<svg style="left:544px;top:689px" width="16" height="12" viewBox="0 0 16 12"><path d="M0 0.500h16" stroke="#000"/><path d="M0 3.500h16" stroke="#000" stroke-dasharray="1 1"/><path d="M0 6.500h16" stroke="#000" stroke-dasharray="3 1"/><path d="M0 10h16" stroke="#000" stroke-width="1.400" stroke-dasharray="2 2"/></svg>
<svg style="left:567px;top:687px" width="16" height="16" viewBox="0 0 16 16"><path d="M0 2.500h13M3 7.500h13M2 12.500h12" stroke="#000" stroke-width="1.200"/><path d="M16 2.500l-4-2.500v5zM0 7.500l4-2.500v5zM0 12.500l4-2.500v5zM16 12.500l-4-2.500v5z" fill="#000"/></svg>
<svg style="left:591px;top:688px" width="14" height="14" viewBox="0 0 14 14"><rect x="2" y="2" width="11" height="11" fill="#8a8a8a" opacity="0.700"/><rect x="0.500" y="0.500" width="10.500" height="10.500" fill="url(#ggreen)" stroke="#2f7a34"/></svg>
<svg style="left:613px;top:688px" width="16" height="15" viewBox="0 0 16 15"><path d="M0.500 4l3.500-3.500h11v9.500l-3.500 3.500h-11z" fill="#4a9a50" stroke="#2f7a34"/><path d="M0.500 4h11v9.500h-11z" fill="url(#ggreen)" stroke="#2f7a34"/><path d="M0.500 4l3.500-3.500h11l-3.500 3.500z" fill="#b8e4b4" stroke="#2f7a34"/></svg>
<svg style="left:633px;top:683px" width="13" height="25" viewBox="0 0 13 25"><path d="M0 0h10l3 3v19l-3 3h-10q2.500-1 2.500-3.500v-18q0-2.500-2.500-3.500z" fill="url(#gopt)"/></svg><svg style="left:637px;top:698px" width="7" height="7" viewBox="0 0 7 7"><path d="M1 1.500h6" stroke="#fff"/><path d="M1 3h6l-3 3.500z" fill="#fff"/><path d="M0 0.500h6" stroke="#000"/><path d="M0 2h6l-3 3.500z" fill="#000"/></svg>

<div class="a" style="left:4px;top:709px;width:927px;height:19px;background:#d4d0c8"></div><div class="t ui" style="left:9px;top:714px;letter-spacing:-0.1px">Ready</div><div class="a" style="left:602px;top:711px;width:34px;height:15px;box-shadow:inset 1px 1px 0 #dcd9d2,inset -1px -1px 0 #e6e4df"></div><div class="a" style="left:637px;top:711px;width:112px;height:15px;box-shadow:inset 1px 1px 0 #dcd9d2,inset -1px -1px 0 #e6e4df"></div><div class="a" style="left:751px;top:711px;width:24px;height:15px;box-shadow:inset 1px 1px 0 #dcd9d2,inset -1px -1px 0 #e6e4df"></div><div class="a" style="left:776px;top:711px;width:30px;height:15px;box-shadow:inset 1px 1px 0 #dcd9d2,inset -1px -1px 0 #e6e4df"></div><div class="a" style="left:807px;top:711px;width:26px;height:15px;box-shadow:inset 1px 1px 0 #dcd9d2,inset -1px -1px 0 #e6e4df"></div><div class="a" style="left:835px;top:711px;width:28px;height:15px;box-shadow:inset 1px 1px 0 #dcd9d2,inset -1px -1px 0 #e6e4df"></div><div class="a" style="left:864px;top:711px;width:25px;height:15px;box-shadow:inset 1px 1px 0 #dcd9d2,inset -1px -1px 0 #e6e4df"></div><div class="a" style="left:890px;top:711px;width:20px;height:15px;box-shadow:inset 1px 1px 0 #dcd9d2,inset -1px -1px 0 #e6e4df"></div><svg style="left:917px;top:715px" width="12" height="12" viewBox="0 0 12 12"><path d="M11.500 0.500l-11 11M11.500 4.500l-7 7M11.500 8.500l-3 3" stroke="#fff"/><path d="M11.500 1.500l-10 10M11.500 5.500l-6 6M11.500 9.500l-2 2" stroke="#808080"/><path d="M11.500 2.500l-9 9M11.500 6.500l-5 5M11.500 10.500l-1 1" stroke="#808080"/></svg>
</body></html>
